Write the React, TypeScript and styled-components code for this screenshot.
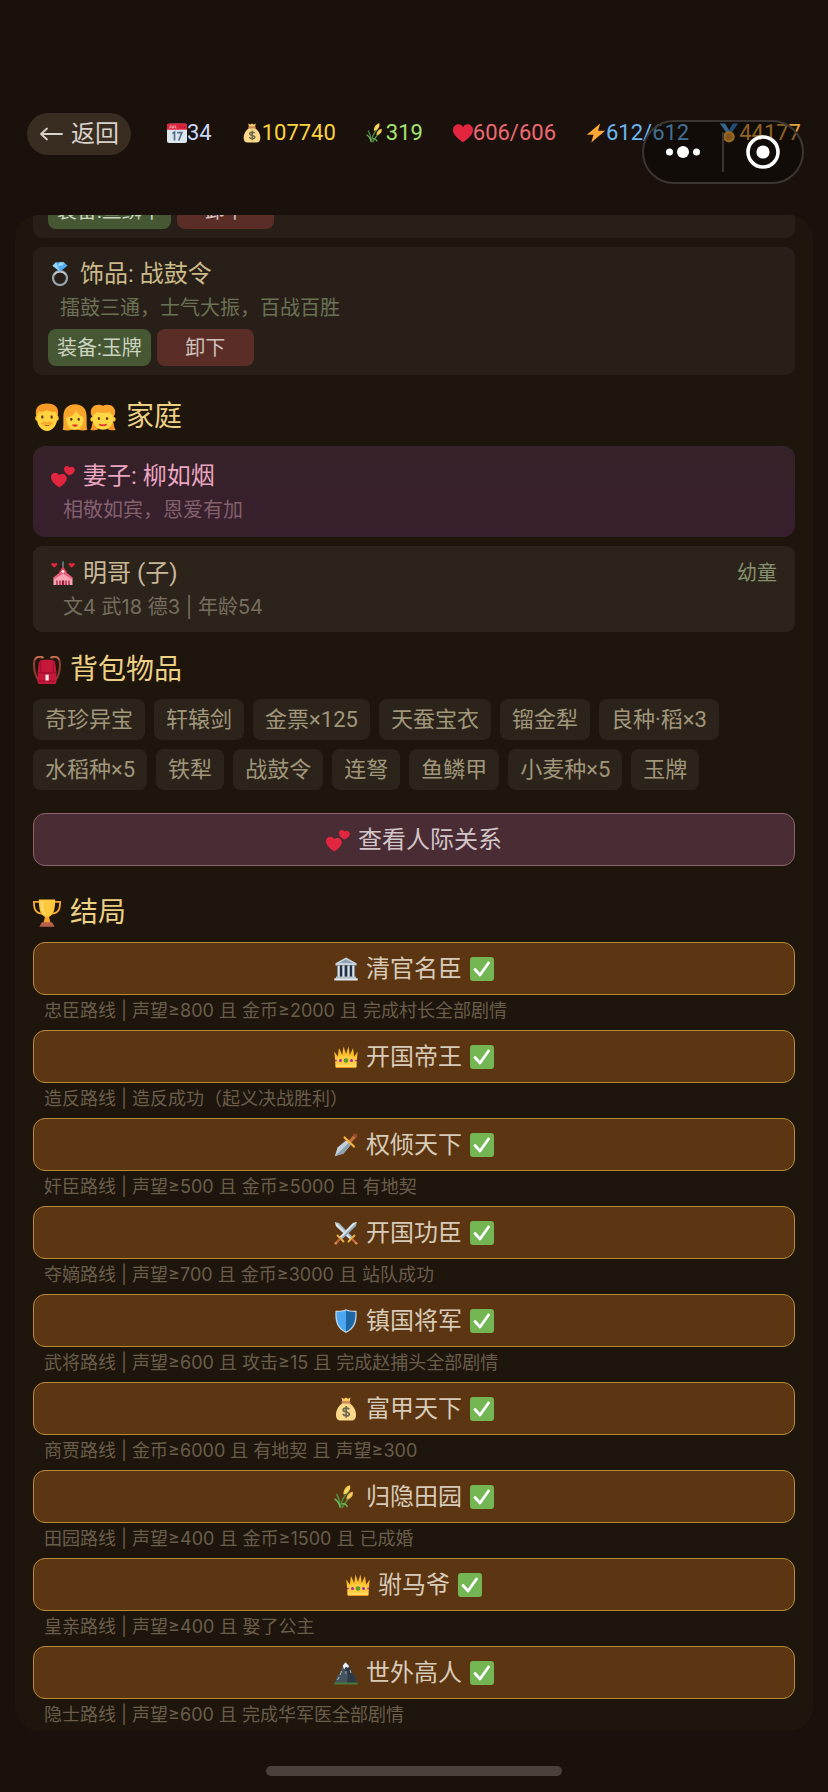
import React from "react";
import styled, { createGlobalStyle, css } from "styled-components";

const GlobalStyle = createGlobalStyle`
  * { box-sizing: border-box; }
  body {
    margin: 0;
    background: #1a110c;
    color: #d9cdbb;
    font-family: Roboto, "Noto Sans CJK SC", sans-serif;
    font-weight: 400;
  }
  button { font: inherit; color: inherit; cursor: pointer; }
  h2, h3, p, ul { margin: 0; padding: 0; font-weight: inherit; }
`;

/* ---------- icons ---------- */

type IconName =
  | "calendar" | "bag" | "rice" | "heart" | "bolt" | "medal" | "ring"
  | "man" | "woman" | "girl" | "hearts" | "church" | "backpack" | "trophy"
  | "temple" | "crown" | "dagger" | "swords" | "shield" | "mountain" | "check";

const glyphs: Record<IconName, React.ReactNode> = {
  calendar: (
    <>
      <rect x="0" y="1" width="24" height="23" rx="2.500" fill="#dbe6ef" />
      <path d="M0 8V3a2.500 2.500 0 0 1 2.500-2.500h19A2.500 2.500 0 0 1 24 3v5z" fill="#df2440" />
      <path d="M4 3v3H2.500M6 3v3h2V3M10 3v3h1.500" fill="none" stroke="#f5c3cb" strokeWidth=".9" />
      <path d="M15 5h1.500M17.800 5h1.500M20.500 5h1.500" stroke="#8d1527" />
      <path d="M6.500 12.500l2.500-1.500V21M12 11.500h5.800L14 21" fill="none" stroke="#56718a" strokeWidth="2.100" />
    </>
  ),
  bag: (
    <>
      <path d="M7.500 .5l2.500 1.200 2-1.200 2 1.200L16.500 .5l-1 5h-7z" fill="#f6c866" />
      <path d="M8.500 6h7c4 3 6.500 7 6.500 11.500 0 4-1.500 6-5 6H7c-3.500 0-5-2-5-6C2 13 4.500 9 8.500 6z" fill="#fbd98a" />
      <rect x="7.500" y="4.200" width="9" height="2.400" rx="1" fill="#c98455" />
      <path d="M15.200 12.200c-.7-1.200-6-1.800-6 .8 0 2.600 6.200 1.300 6.200 4.100 0 2.500-5.200 2.300-6.500-.1M12.200 9v11.800" fill="none" stroke="#6b6650" strokeWidth="1.700" />
    </>
  ),
  rice: (
    <>
      <path d="M6.500 23C7 16 10 11 14 7M8 23C11 17 14 14 16 12M6 23C6 17 5 13 2.500 9" fill="none" stroke="#4d9140" strokeWidth="1.500" />
      <path d="M6 22C5 17 3.500 15.500 .5 14M8 19c3-1 4 .5 5.500 3" fill="none" stroke="#6fb457" strokeWidth="1.400" />
      <path d="M9.500 9.500C9 5 12 1 16 .3c1.200 4-1.500 8.200-6.500 9.200z" fill="#f6c94c" />
      <path d="M12.500 14.500c0-4 2-7 6.300-7.700.8 4-1.500 7.200-6.300 7.700z" fill="#eebb43" />
      <path d="M11.500 7.500l3-5M14.500 12.500l3-4" stroke="#fff0a6" strokeWidth="1" />
    </>
  ),
  heart: <path d="M12 23C5 18 0 13.800 0 8.300 0 4.400 3 1.600 6.400 1.600c2.300 0 4.500 1.200 5.600 3.400 1.100-2.200 3.300-3.400 5.600-3.400C21 1.600 24 4.400 24 8.300 24 13.800 19 18 12 23z" fill="#e2263f" />,
  bolt: <path d="M17 .5L1 14.200h8L6.300 23.500 23 9.300h-8.500z" fill="#ffa836" />,
  medal: (
    <>
      <path d="M1 .5h6.500l5 9-3.500 2.200z" fill="#59a5ea" />
      <path d="M23 .5h-6.500l-5 9 3.500 2.200z" fill="#367fc9" />
      <circle cx="12" cy="16.500" r="7" fill="#f3a93b" />
      <circle cx="12" cy="16.500" r="4" fill="#d58a2c" />
    </>
  ),
  ring: (
    <>
      <circle cx="12" cy="16" r="7" fill="none" stroke="#98a5ad" strokeWidth="2.200" />
      <path d="M6.200 13a7 7 0 0 1 11.600 0" fill="none" stroke="#c5cfd5" strokeWidth="1.200" />
      <path d="M8 .3h8l3.500 3.500-7.500 5.700L4.500 3.800z" fill="#51aaf0" />
      <path d="M8 .3L9.500 3.800 12 9.500 4.500 3.800zM16 .3l-1.500 3.500h-5L12 .3z" fill="#9ad7fb" />
    </>
  ),
  man: (
    <>
      <ellipse cx="3.200" cy="13" rx="1.300" ry="2.200" fill="#f9b42f" /><ellipse cx="20.800" cy="13" rx="1.300" ry="2.200" fill="#f9b42f" />
      <path d="M3 11C3 4 7 1.500 12 1.500S21 4 21 11c0 8-4 13-9 13S3 19 3 11z" fill="#ffd23e" />
      <path d="M2.800 11.500C1 4 5 .5 12 .5S23 4 21.200 11.500L19.500 7.500c-3 .5-6-.5-8-1.500-1.500 1.500-4 1.800-7 1.500z" fill="#f79a26" />
      <path d="M6.500 18c2-2.200 4-2.600 5.500-1.600 1.500-1 3.500-.6 5.500 1.600-2 1-4 1.300-5.500.3-1.500 1-3.500.7-5.500-.3z" fill="#f6ac2d" />
      <path d="M10 19.300h4" stroke="#c65a24" />
      <ellipse cx="8" cy="12" rx="1" ry="1.400" fill="#5b381b" /><ellipse cx="16" cy="12" rx="1" ry="1.400" fill="#5b381b" />
    </>
  ),
  woman: (
    <>
      <path d="M1.500 23C3 18 .5 9 4 4.500c4-4.700 12-4.700 16 0C23.500 9 21 18 22.500 23c-3 1-6 .5-8 0h-5c-2 .5-5 1-8 0z" fill="#f9a42b" />
      <path d="M4.500 12.500c4.500-.5 7-2.500 8.500-6 1.500 3.500 4 5 6.500 6 0 6-3 10.500-7.500 10.500s-7.500-4.500-7.500-10.500z" fill="#ffd644" />
      <ellipse cx="8.800" cy="14" rx="1" ry="1.300" fill="#5b381b" /><ellipse cx="15.200" cy="14" rx="1" ry="1.300" fill="#5b381b" />
      <path d="M9.500 18.500h5c-.6 2.600-4.400 2.600-5 0z" fill="#df3432" />
    </>
  ),
  girl: (
    <>
      <path d="M1 23c2-2 1-4.500 2.500-7L8 22.500c-2 1-5 1.300-7 .5zM23 23c-2-2-1-4.500-2.500-7L16 22.500c2 1 5 1.300 7 .5z" fill="#f7972a" />
      <path d="M3.500 12.500C-.5 8 2 1.500 8 1.500c1.500 0 3 .2 4 1 1-.8 2.500-1 4-1 6 0 8.500 6.500 4.500 11z" fill="#f9a42b" />
      <ellipse cx="2.600" cy="14" rx="1.400" ry="2" fill="#ffc938" /><ellipse cx="21.400" cy="14" rx="1.400" ry="2" fill="#ffc938" />
      <ellipse cx="12" cy="13.500" rx="9" ry="9.500" fill="#ffd644" />
      <path d="M3.500 10.500C4 5 7 3 12 3s8 2 8.500 7.500c-1.500-.5-2.200-1.500-2.700-2.700-3 1-8.600 1-11.600 0-.5 1.200-1.200 2.200-2.700 2.700z" fill="#f9a42b" />
      <ellipse cx="8.500" cy="13.300" rx="1" ry="1.300" fill="#5b381b" /><ellipse cx="15.500" cy="13.300" rx="1" ry="1.300" fill="#5b381b" />
      <path d="M8.800 18.300c2 1.200 4.400 1.200 6.400 0" fill="none" stroke="#df3432" strokeWidth="1.500" />
    </>
  ),
  hearts: (
    <>
      <path d="M8.500 23.500C3 20 0 16.500 0 13c0-4 5-6 8-2 4-2.500 8.300 0 7.800 4-.5 3.200-3.800 6-7.300 8.500z" fill="#e2263f" />
      <path d="M18.500 11.500C15 9.500 12.800 7.500 13 4.800c.2-2.700 3.500-4 5.300-1.300 3-1.800 6 .2 5.500 3-.5 2.200-2.800 4-5.300 5z" fill="#e2263f" />
    </>
  ),
  church: (
    <>
      <path d="M12 .5v6" stroke="#788e9d" strokeWidth="1.400" />
      <path d="M12 5.500l3.500 5v4H8.500v-4z" fill="#e2415b" />
      <path d="M12 11l9.500 6.500V24H2.500v-6.500z" fill="#f7a5b4" />
      <path d="M12 9L2 16.800l1.200 1.400 8.800-5.400 8.800 5.400 1.200-1.400z" fill="#e8607a" />
      <path d="M6 24v-4.500M9 24v-4.500M15 24v-4.500M18 24v-4.500" stroke="#a8263f" strokeWidth="1.400" />
      <path d="M10.800 24v-3.500a1.200 1.200 0 0 1 2.400 0V24z" fill="#8e1f35" />
      <circle cx="12" cy="10.500" r="1.400" fill="#fde4e8" />
      <path d="M3.300 6.800L.5 4c-1-1.900 1.500-3 2.800-1.200C4.600 1 7.100 2.100 6.100 4zM20.700 6.800L17.900 4c-1-1.900 1.500-3 2.800-1.200C22 1 24.500 2.100 23.500 4z" fill="#e2263f" />
    </>
  ),
  backpack: (
    <>
      <path d="M8 1.500C3-.5.8 2 .9 8c.1 6 1.100 9.500 4.100 13M16 1.500c5-2 7.200.5 7.100 6.500-.1 6-1.100 9.500-4.100 13" fill="none" stroke="#8d3f2f" strokeWidth="1.800" />
      <path d="M9 1.800C7-.3 3 .2 1.800 3M15 1.800c2-2.100 6-1.600 7.200 1.200" fill="none" stroke="#c2714f" strokeWidth="1.500" />
      <path d="M5 5.500c.5-2 2.500-2.300 7-2.300s6.500.3 7 2.300l1 8v8.700c0 1.200-.8 1.800-2 1.800H6c-1.200 0-2-.6-2-1.800v-8.700z" fill="#c6183a" />
      <path d="M4 14.500h16M5.500 21.500h13" stroke="#9a0f2d" strokeWidth="1" />
      <path d="M6.500 5v9M17.500 5v9" stroke="#a81030" strokeWidth="1.200" />
      <rect x="10.700" y="16" width="2.800" height="5" fill="#f7e9e6" />
    </>
  ),
  trophy: (
    <>
      <path d="M6 2.500H.8c0 6 1.200 9.500 7.200 10M18 2.500h5.200c0 6-1.200 9.500-7.200 10" fill="none" stroke="#f5a82f" strokeWidth="1.600" />
      <path d="M5 .5h14c0 8-1 13-5.500 15v4h-3v-4C6 13.500 5 8.500 5 .5z" fill="#ffc83d" />
      <path d="M7.500 2c0 5 .8 8.500 2.500 11" stroke="#ffe08a" strokeWidth="1.300" fill="none" />
      <path d="M10.200 15.500h3.600l1.200 5H9z" fill="#f4a52f" />
      <path d="M7.500 20h9l2 3.800h-13z" fill="#b7604a" />
    </>
  ),
  temple: (
    <>
      <path d="M12 .5l10.500 5.700V8.500h-21V6.200z" fill="#c9d5de" />
      <path d="M12 2.300l7 3.800H5z" fill="#8fa2b0" />
      <path d="M3 8.500h18V20H3z" fill="#1f3144" />
      <path d="M3.500 8.500h2.300v11.500H3.500zM8.300 8.500h2.300v11.500H8.300zM13.400 8.500h2.300v11.500h-2.300zM18.200 8.500h2.300v11.500h-2.300z" fill="#dbe4eb" />
      <path d="M2 19.500h20V21.300H2z" fill="#b3c1cc" />
      <path d="M.3 21.200h23.400v2.300H.3z" fill="#e0e8ee" />
    </>
  ),
  crown: (
    <>
      <path d="M1.800 22L.3 6.500l3.500 5L5 3l3.200 7L9.500 1.500 12 9l2.500-7.500L15.800 10 19 3l1.200 8.500 3.500-5L22.200 22z" fill="#fcbb2a" />
      <path d="M1.200 11.500c2.500 1.500 5 .5 6.500-1.500 1.500 2 3 1.500 4.300-1 1.300 2.500 2.800 3 4.300 1 1.500 2 4 3 6.500 1.500L22.200 22H1.800z" fill="#ffcc3f" />
      <path d="M1.700 19.500h20.600V22H1.700z" fill="#ffd95c" />
      <path d="M1.700 22h20.600v1H1.700z" fill="#e49a22" />
      <circle cx="12" cy="15.500" r="2.300" fill="#5c9a2d" />
      <circle cx="6.500" cy="15.500" r="1.500" fill="#a42ba0" /><circle cx="17.500" cy="15.500" r="1.500" fill="#a42ba0" />
      <circle cx="1.900" cy="15.500" r=".9" fill="#a42ba0" /><circle cx="22.100" cy="15.500" r=".9" fill="#a42ba0" />
    </>
  ),
  dagger: (
    <>
      <path d="M.8 23.200L3.500 14.500 12.500 7l4.500 4.500L9.500 20.500z" fill="#c3d1da" />
      <path d="M.8 23.200L15 9.500l2 2L9.500 20.500z" fill="#8ea2b0" />
      <path d="M14.500 8L19.500 2l2.800 2.300-5.800 6z" fill="#c66e43" />
      <path d="M19.500.5L23 1l.5 3.200-2 .8-2.500-2.300z" fill="#9a4a2c" />
      <path d="M10.500 4.500l9.500 9" stroke="#f4b23d" strokeWidth="2.200" strokeLinecap="round" />
    </>
  ),
  swords: (
    <>
      <path d="M1 1l4 1 13.500 14-2.500 2.500L2 5z" fill="#a9bdc9" />
      <path d="M1 1l16.500 16.500L16 18.500 2 5z" fill="#dce6ec" />
      <path d="M23 1l-4 1L5.500 16 8 18.500 22 5z" fill="#93abba" />
      <path d="M23 1L6.500 17.500 5.500 16 19 2z" fill="#dce6ec" />
      <path d="M3.500 14.500l6 6M20.500 14.500l-6 6" stroke="#eeb244" strokeWidth="1.800" strokeLinecap="round" />
      <path d="M6 18l-4 4M18 18l4 4" stroke="#c4683e" strokeWidth="2.300" />
      <circle cx="1.800" cy="22.200" r="1.300" fill="#e88e45" /><circle cx="22.200" cy="22.200" r="1.300" fill="#e88e45" />
    </>
  ),
  shield: (
    <>
      <path d="M12 .3c3.500 1.400 7 1.600 10.500 1.400C23.500 13 20.500 20 12 23.900 3.500 20 .5 13 1.500 1.700 5 1.900 8.500 1.700 12 .3z" fill="#c3d6e2" />
      <path d="M12 1.500v21C4.800 19 2.200 12.800 2.600 2.900 6 3 9 2.700 12 1.500z" fill="#4ca6f0" />
      <path d="M12 1.500v21c7.200-3.500 9.800-9.700 9.400-19.600-3.400.1-6.400-.2-9.400-1.400z" fill="#1f68a8" />
    </>
  ),
  mountain: (
    <>
      <path d="M.5 22L3.500 14.500l2-1.500L8.500 5l3-3.500L15 5l3 7 2.500 2L23.500 22z" fill="#45535f" />
      <path d="M11.500 1.500L15 5l3 7 2.500 2L23.500 22H13l1-8-3-4z" fill="#2d3945" />
      <path d="M11.500 1.300L15 5l-1 2-2-1.300L10 8.500 9.300 6 8.700 4.800z" fill="#eaf1f5" />
      <path d="M7.500 10l-1.500 4M16 9l1 3M5 16l-1.500 3M12 10v3" stroke="#b5c5d0" strokeWidth=".9" fill="none" />
      <path d="M.3 21.500h23.400v2H.3z" fill="#477b39" />
    </>
  ),
  check: (
    <>
      <rect x="0" y="0" width="24" height="24" rx="3" fill="#74b554" />
      <path d="M5 12.500l5 5.500L18.500 6" fill="none" stroke="#fff" strokeWidth="2.800" strokeLinecap="round" strokeLinejoin="round" />
    </>
  ),
};

const Svg = styled.svg<{ $size: number }>`
  flex: none;
  display: block;
  width: ${(p) => p.$size}px;
  height: ${(p) => p.$size}px;
`;

const Icon = ({ name, size = 24 }: { name: IconName; size?: number }) => (
  <Svg viewBox="0 0 24 24" $size={size} aria-hidden="true">{glyphs[name]}</Svg>
);

/* ---------- header ---------- */

const Screen = styled.div`
  position: relative;
  display: flex;
  flex-direction: column;
  min-height: 100vh;
`;

const Header = styled.header`
  display: flex;
  align-items: flex-start;
  justify-content: space-between;
  gap: 36px;
  padding: 113px 27px 60px;
`;

const BackButton = styled.button`
  flex: none;
  display: flex;
  align-items: center;
  gap: 8px;
  height: 42px;
  padding: 0 12px;
  border: 0;
  border-radius: 21px;
  background: #392d22;
  color: #d8d2ca;
  font-size: 24px;
  line-height: 36px;
`;

const Stats = styled.ul`
  flex: 1;
  display: flex;
  justify-content: space-between;
  list-style: none;
`;

const Stat = styled.li<{ $color: string }>`
  display: flex;
  align-items: center;
  color: ${(p) => p.$color};
  font-size: 22px;
  line-height: 40px;
  white-space: nowrap;
`;

const Capsule = styled.div`
  position: absolute;
  top: 120px;
  right: 24px;
  display: flex;
  align-items: center;
  width: 162px;
  height: 64px;
  border: 2px solid #3b3631;
  border-radius: 32px;
  background: rgba(5, 4, 3, 0.4);
`;

const CapsuleButton = styled.button`
  flex: 1;
  display: flex;
  align-items: center;
  justify-content: center;
  height: 40px;
  padding: 0;
  border: 0;
  background: none;

  & + & { border-left: 2px solid #3b3631; }
`;

/* ---------- panel ---------- */

const Panel = styled.main`
  flex: 1;
  margin: 0 15px;
  padding: 0 18px;
  border-radius: 24px;
  background: #1e150d;
  overflow: hidden;
`;

const Card = styled.article<{ $tone?: "wife" | "child"; $scrolled?: boolean }>`
  margin-bottom: 9px;
  padding: 9px 15px;
  border-radius: 9px;
  background: #282018;
  ${(p) => p.$scrolled && css`margin-top: -32px;`}
  ${(p) => p.$tone === "wife" && css`
    padding: 12px 18px 11px;
    border-radius: 12px;
    background: linear-gradient(#362229, #381f2d);
  `}
  ${(p) => p.$tone === "child" && css`
    padding: 9px 18px;
    background: #2c241b;
  `}
  &:last-child { margin-bottom: 0; }
`;

const CardTitle = styled.h3<{ $color: string }>`
  display: flex;
  align-items: center;
  gap: 8px;
  color: ${(p) => p.$color};
  font-size: 24px;
  line-height: 36px;
`;

const CardNote = styled.p<{ $color: string }>`
  padding-left: 12px;
  color: ${(p) => p.$color};
  font-family: Inter, "Noto Sans CJK SC", sans-serif;
  font-size: 20px;
  line-height: 32px;
`;

const AgeTag = styled.span`
  margin-left: auto;
  color: #87916d;
  font-size: 20px;
`;

const Actions = styled.div`
  display: flex;
  gap: 6px;

  ${CardNote} + & { margin-top: 5px; }
`;

const ActionButton = styled.button<{ $kind: "equip" | "remove" }>`
  height: 37px;
  min-width: 97px;
  padding: 0 9px;
  border: 0;
  border-radius: 8px;
  background: ${(p) => (p.$kind === "equip" ? "#455833" : "#5a2e27")};
  color: ${(p) => (p.$kind === "equip" ? "#cdd3c0" : "#d0c2bd")};
  font-size: 20px;
  line-height: 30px;
`;

const Section = styled.section<{ $top: number }>`
  padding-top: ${(p) => p.$top}px;
`;

const SectionTitle = styled.h2`
  display: flex;
  align-items: center;
  gap: 9px;
  margin-bottom: 9px;
  color: #ecd084;
  font-size: 28px;
  line-height: 40px;
`;

const IconGroup = styled.span`
  display: flex;
`;

const Chips = styled.ul`
  display: flex;
  flex-wrap: wrap;
  gap: 9px;
  list-style: none;
`;

const Chip = styled.li`
  padding: 0 12px;
  border-radius: 8px;
  background: #2c241b;
  color: #a0967a;
  font-size: 22px;
  line-height: 41px;
`;

const WideButton = styled.button<{ $tone: "pink" | "gold" }>`
  display: flex;
  align-items: center;
  justify-content: center;
  gap: 8px;
  width: 100%;
  height: 53px;
  padding: 0;
  border: 1px solid ${(p) => (p.$tone === "pink" ? "#8b616a" : "#b58c34")};
  border-radius: 12px;
  background: ${(p) => (p.$tone === "pink" ? "#4a2c34" : "#5c3612")};
  color: ${(p) => (p.$tone === "pink" ? "#d2c6c8" : "#d8cbb8")};
  font-size: 24px;
  line-height: 36px;
`;

const Ending = styled.li`
  margin-bottom: 3px;
  list-style: none;

  &:last-child { margin-bottom: 0; }
`;

const EndingNote = styled.p`
  padding-left: 11px;
  color: #6a5e4a;
  font-family: Inter, "Noto Sans CJK SC", sans-serif;
  font-size: 18px;
  line-height: 32px;
`;

const Footer = styled.footer`
  display: flex;
  justify-content: center;
  padding: 35px 0 16px;
`;

const HomeBar = styled.div`
  width: 296px;
  height: 10px;
  border-radius: 5px;
  background: #4b413c;
`;

/* ---------- data ---------- */

const stats: { icon: IconName; value: string; color: string }[] = [
  { icon: "calendar", value: "34", color: "#c9d8f6" },
  { icon: "bag", value: "107740", color: "#fbd43f" },
  { icon: "rice", value: "319", color: "#a5e272" },
  { icon: "heart", value: "606/606", color: "#ee6a70" },
  { icon: "bolt", value: "612/612", color: "#6bb7f2" },
  { icon: "medal", value: "44177", color: "#e5a23c" },
];

const items = [
  "奇珍异宝", "轩辕剑", "金票×125", "天蚕宝衣", "镏金犁", "良种·稻×3",
  "水稻种×5", "铁犁", "战鼓令", "连弩", "鱼鳞甲", "小麦种×5", "玉牌",
];

const endings: { icon: IconName; name: string; note: string }[] = [
  { icon: "temple", name: "清官名臣", note: "忠臣路线 | 声望≥800 且 金币≥2000 且 完成村长全部剧情" },
  { icon: "crown", name: "开国帝王", note: "造反路线 | 造反成功（起义决战胜利）" },
  { icon: "dagger", name: "权倾天下", note: "奸臣路线 | 声望≥500 且 金币≥5000 且 有地契" },
  { icon: "swords", name: "开国功臣", note: "夺嫡路线 | 声望≥700 且 金币≥3000 且 站队成功" },
  { icon: "shield", name: "镇国将军", note: "武将路线 | 声望≥600 且 攻击≥15 且 完成赵捕头全部剧情" },
  { icon: "bag", name: "富甲天下", note: "商贾路线 | 金币≥6000 且 有地契 且 声望≥300" },
  { icon: "rice", name: "归隐田园", note: "田园路线 | 声望≥400 且 金币≥1500 且 已成婚" },
  { icon: "crown", name: "驸马爷", note: "皇亲路线 | 声望≥400 且 娶了公主" },
  { icon: "mountain", name: "世外高人", note: "隐士路线 | 声望≥600 且 完成华军医全部剧情" },
];

export default function App() {
  return (
    <>
      <GlobalStyle />
      <Screen>
        <Header>
          <BackButton>
            <svg width="24" height="24" viewBox="0 0 24 24" fill="none" stroke="currentColor" strokeWidth="1.800" strokeLinecap="round" strokeLinejoin="round" aria-hidden="true">
              <path d="M23 12H2M8 6.500L2 12l6 5.500" />
            </svg>
            返回
          </BackButton>
          <Stats>
            {stats.map((s) => (
              <Stat key={s.icon} $color={s.color}>
                <Icon name={s.icon} size={20} />
                {s.value}
              </Stat>
            ))}
          </Stats>
        </Header>
        <Capsule>
          <CapsuleButton aria-label="更多">
            <svg width="36" height="14" viewBox="0 0 36 14" fill="#fff" aria-hidden="true">
              <circle cx="4.500" cy="7" r="3.500" /><circle cx="18" cy="7" r="6" /><circle cx="31.500" cy="7" r="3.500" />
            </svg>
          </CapsuleButton>
          <CapsuleButton aria-label="关闭">
            <svg width="34" height="34" viewBox="0 0 34 34" aria-hidden="true">
              <circle cx="17" cy="17" r="15" fill="none" stroke="#fff" strokeWidth="3.600" />
              <circle cx="17" cy="17" r="6.600" fill="#fff" />
            </svg>
          </CapsuleButton>
        </Capsule>

        <Panel>
          <Card $scrolled>
            <Actions>
              <ActionButton $kind="equip">装备:鱼鳞甲</ActionButton>
              <ActionButton $kind="remove">卸下</ActionButton>
            </Actions>
          </Card>
          <Card>
            <CardTitle $color="#cab989"><Icon name="ring" />饰品: 战鼓令</CardTitle>
            <CardNote $color="#6b7155">擂鼓三通，士气大振，百战百胜</CardNote>
            <Actions>
              <ActionButton $kind="equip">装备:玉牌</ActionButton>
              <ActionButton $kind="remove">卸下</ActionButton>
            </Actions>
          </Card>

          <Section $top={13}>
            <SectionTitle>
              <IconGroup>
                <Icon name="man" size={28} /><Icon name="woman" size={28} /><Icon name="girl" size={28} />
              </IconGroup>
              家庭
            </SectionTitle>
            <Card $tone="wife">
              <CardTitle $color="#eaa6c0"><Icon name="hearts" />妻子: 柳如烟</CardTitle>
              <CardNote $color="#82606d">相敬如宾，恩爱有加</CardNote>
            </Card>
            <Card $tone="child">
              <CardTitle $color="#c8b899"><Icon name="church" />明哥 (子)<AgeTag>幼童</AgeTag></CardTitle>
              <CardNote $color="#776e5f">文4 武18 德3 | 年龄54</CardNote>
            </Card>
          </Section>

          <Section $top={18}>
            <SectionTitle><Icon name="backpack" size={28} />背包物品</SectionTitle>
            <Chips>{items.map((i) => <Chip key={i}>{i}</Chip>)}</Chips>
          </Section>

          <Section $top={23}>
            <WideButton $tone="pink"><Icon name="hearts" />查看人际关系</WideButton>
          </Section>

          <Section $top={27}>
            <SectionTitle><Icon name="trophy" size={28} />结局</SectionTitle>
            <ul>
              {endings.map((e) => (
                <Ending key={e.name}>
                  <WideButton $tone="gold"><Icon name={e.icon} />{e.name}<Icon name="check" /></WideButton>
                  <EndingNote>{e.note}</EndingNote>
                </Ending>
              ))}
            </ul>
          </Section>
        </Panel>

        <Footer><HomeBar /></Footer>
      </Screen>
    </>
  );
}
